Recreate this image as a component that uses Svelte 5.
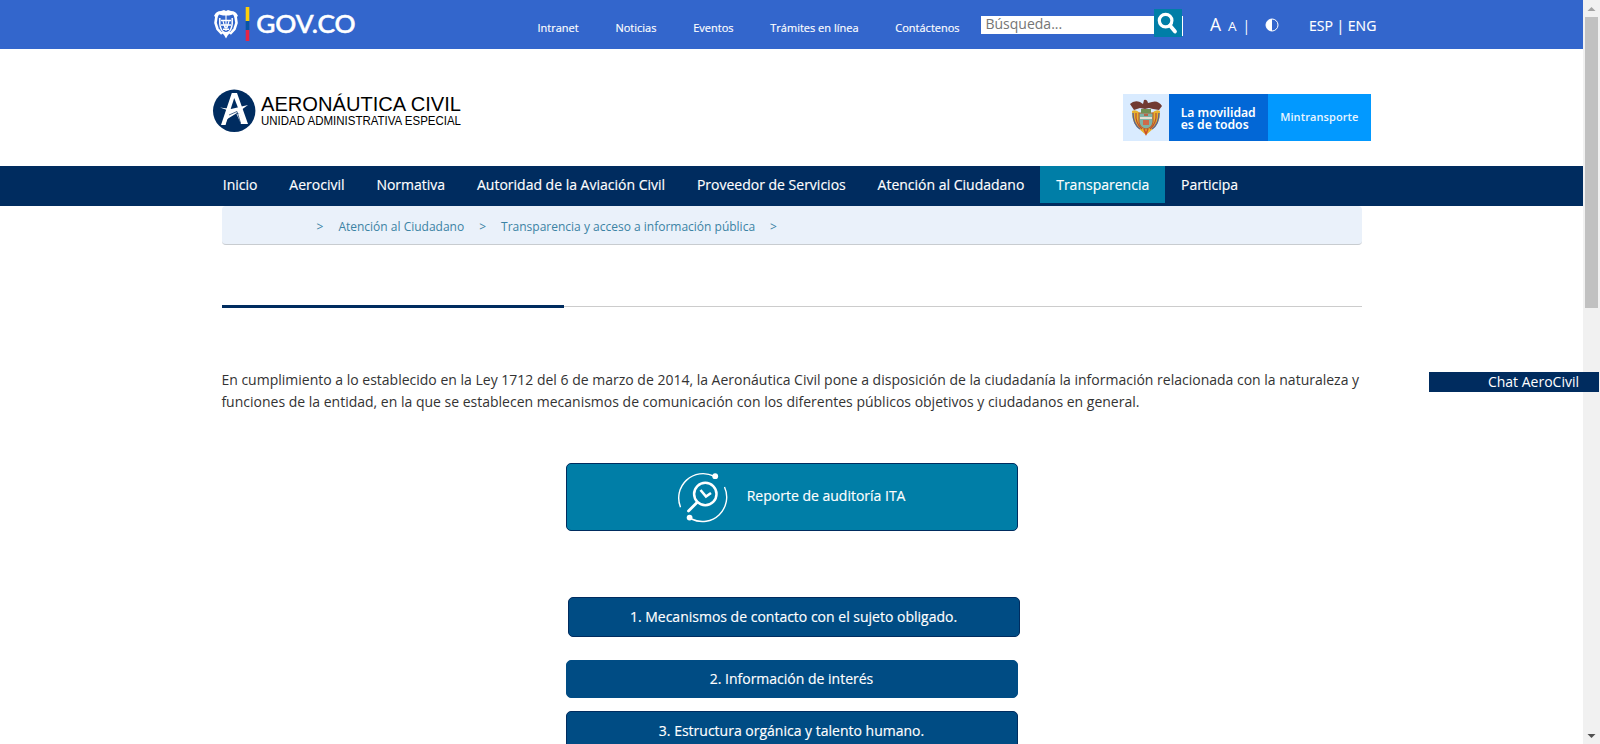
<script>
  const links = ['Intranet', 'Noticias', 'Eventos', 'Trámites en línea', 'Contáctenos'];
  const menu = ['Inicio', 'Aerocivil', 'Normativa', 'Autoridad de la Aviación Civil', 'Proveedor de Servicios', 'Atención al Ciudadano', 'Transparencia', 'Participa'];
  const topics = ['1. Mecanismos de contacto con el sujeto obligado.', '2. Información de interés', '3. Estructura orgánica y talento humano.'];
</script>

<div class="viewport">
  <div class="page">
    <header class="gov">
      <svg class="govlogo" width="150" height="49" viewBox="0 0 150 49" role="img" aria-label="Gobierno de Colombia">
        <g fill="none" stroke="#fff">
          <path d="M1 16Q3 11 8 11L11 10L13 11L15 10L18 11Q23 11 25 16L22 18L20 14.5L16 15.5H10L6 14.5L4 18Z" fill="#fff" stroke="none" />
          <path d="M3.5 16L2.5 23L4.5 29L9 34M22.5 16L23.5 23L21.5 29L17 34" stroke-width="2.6" />
          <path d="M6.8 18V24Q7.5 29.5 10 31.5Q13 34 16 31.5Q18.5 29.5 19.2 24V18" stroke-width="1.5" />
          <path d="M8 20.5H18M8 25H18M10 29.3H16" stroke-width="1.4" />
          <path d="M13 14V31M10 21L12 28M16 21L14 28" stroke-width="1.1" />
          <path d="M8 32L11 35L13 38.5L15 35L18 32Z" fill="#fff" stroke="none" />
        </g>
        <path fill="#fdcf08" d="M32.7 7h3.6v14h-3.6z" />
        <path fill="#0a55a5" d="M32.7 21h3.6v9h-3.6z" />
        <path fill="#e82444" d="M32.7 30h3.6v11h-3.6z" />
        <text x="43.2" y="33.2" textLength="99.4" lengthAdjust="spacingAndGlyphs" class="govtext">GOV.CO</text>
      </svg>
      <nav class="toplinks">
        {#each links as l}<a href="#top">{l}</a>{/each}
      </nav>
      <div class="search">
        <input placeholder="Búsqueda..." aria-label="Búsqueda" />
        <button aria-label="Buscar">
          <svg width="28" height="28" viewBox="0 0 28 28"><circle cx="11.6" cy="11.6" r="6.3" fill="none" stroke="#fff" stroke-width="3.2" /><path d="M16 16.6L21 22.5" stroke="#fff" stroke-width="3.8" stroke-linecap="round" /></svg>
        </button>
        <i></i>
      </div>
      <div class="sizes"><span class="big">A</span><span class="small">A</span><span class="bar">|</span></div>
      <svg class="contrast" width="14" height="14" viewBox="0 0 14 14"><circle cx="7" cy="7" r="6" fill="none" stroke="#fff" /><path d="M7 1a6 6 0 0 0 0 12z" fill="#fff" /></svg>
      <div class="lang">ESP | ENG</div>
    </header>

    <section class="brand">
      <svg width="252" height="50" viewBox="0 0 252 50" role="img" aria-label="Aeronáutica Civil">
        <circle cx="21.2" cy="24.8" r="21.2" fill="#002c60" />
        <path d="M8 39L18.8 7H24L35 38H30L26.4 27.5L21 26L15 30L12.6 39Z" fill="#fff" />
        <path d="M21.2 12L17.2 24.5L25.2 22.3Z" fill="#002c60" />
        <path d="M7 21.5L18 23L35 19L24 27L11 35L18 25.5Z" fill="#fff" />
        <path d="M13 26L17 28L12 38L11 36ZM23.5 28L28 38H31L26.5 27Z" fill="#fff" />
        <path d="M16 29L24 25.5L27.5 37" fill="none" stroke="#002c60" stroke-width=".7" />
        <text x="48" y="25.2" font-size="20.4" textLength="200" lengthAdjust="spacingAndGlyphs">AERONÁUTICA CIVIL</text>
        <text x="48" y="39.2" font-size="13.3" textLength="200" lengthAdjust="spacingAndGlyphs">UNIDAD ADMINISTRATIVA ESPECIAL</text>
      </svg>
      <svg width="248" height="48" viewBox="0 0 248 48" role="img" aria-label="Mintransporte">
        <path fill="#d9ebff" d="M0 0h46v47H0z" />
        <path fill="#0267d6" d="M46 0h99v47H46z" />
        <path fill="#0299ff" d="M145 0h103v47H145z" />
        <path d="M7 10Q11 6 17 8L20 10L21 6Q24 5 25 9L29 8Q35 6 39 12L36 16L30 15L26 14L22 15L17 14L11 16Z" fill="#713a32" />
        <path d="M9 17Q13 15 17 19H29Q33 15 37 17Q37 29 31 34L23 41L15 34Q9 29 9 17Z" fill="#e7b22e" />
        <path d="M10 19Q10 30 17 35M36 19Q36 30 29 35" fill="none" stroke="#5b648f" stroke-width="1.4" />
        <path d="M13 19Q12 29 19 35M33 19Q34 29 27 35" fill="none" stroke="#b94b35" stroke-width="1.2" />
        <path d="M16 19H30V28Q29 34 23 35Q17 34 16 28Z" fill="#7fb3a6" stroke="#b8602f" stroke-width="1.1" />
        <path d="M18 15H28V19H18Z" fill="#719052" />
        <path d="M17 23H29V25H17Z" fill="#e7dfd2" />
        <path d="M20 26H26V31H20Z" fill="#cf6a4a" />
        <path d="M21 21H25M21 35L23 40L25 35" fill="none" stroke="#c84c2b" stroke-width="1.5" />
        <text class="mt" x="57.7" y="23.3" textLength="75" lengthAdjust="spacingAndGlyphs">La movilidad</text>
        <text class="mt" x="57.7" y="35.2" textLength="68" lengthAdjust="spacingAndGlyphs">es de todos</text>
        <text class="mt min" x="157.2" y="27.2" textLength="78.2" lengthAdjust="spacing">Mintransporte</text>
      </svg>
    </section>

    <nav class="menu">
      {#each menu as m}<a href="#menu" class:active={m === 'Transparencia'}>{m}</a>{/each}
    </nav>

    <main>
      <div class="crumbs">
        <span>&gt;</span><a href="#atencion">Atención al Ciudadano</a><span>&gt;</span><a href="#info">Transparencia y acceso a información pública</a><span>&gt;</span>
      </div>
      <div class="rule"><div></div></div>
      <p>En cumplimiento a lo establecido en la Ley 1712 del 6 de marzo de 2014, la Aeronáutica Civil pone a disposición de la ciudadanía la información relacionada con la naturaleza y<br />funciones de la entidad, en la que se establecen mecanismos de comunicación con los diferentes públicos objetivos y ciudadanos en general.</p>
      <a class="report" href="#ita">
        <svg width="54" height="54" viewBox="0 0 54 54" fill="none" stroke="#fff">
          <path d="M5.5 37.2A24.4 24.4 0 0 1 39 6.2M49.5 17A24.4 24.4 0 0 1 16.5 49" stroke-width="1.4" />
          <circle cx="40.2" cy="6.2" r="2.9" fill="#fff" stroke="none" />
          <circle cx="14.6" cy="47.6" r="2.9" fill="#fff" stroke="none" />
          <circle cx="30.3" cy="24" r="11.2" stroke-width="2.5" />
          <path d="M22 32.5L13.5 41" stroke-width="2.8" stroke-linecap="round" />
          <path d="M25.5 20L31 26.5L36 23" stroke-width="2.6" />
        </svg>
        <span>Reporte de auditoría ITA</span>
      </a>
      <div class="topics">
        {#each topics as t}<a href="#tema">{t}</a>{/each}
      </div>
    </main>
  </div>
  <aside class="scroll">
    <svg width="17" height="17"><path d="M4.5 11L8.5 7L12.5 11Z" fill="#a3a3a3" /></svg>
    <div class="thumb"></div>
    <svg class="down" width="17" height="17"><path d="M4.5 7L8.5 11L12.5 7Z" fill="#505050" /></svg>
  </aside>
  <a class="chat" href="#chat">Chat AeroCivil</a>
</div>

<style>
  :global(body) { margin: 0; overflow: hidden; background: #fff; }
  * { box-sizing: border-box; }
  a { text-decoration: none; color: #fff; white-space: nowrap; }
  svg { display: block; flex: none; overflow: visible; }
  .viewport { position: relative; display: flex; width: 1600px; height: 744px; overflow: hidden; font: 14px/20px "Open Sans", "Noto Sans", sans-serif; }
  .page { width: 1583px; height: 744px; overflow: hidden; }
  .gov { height: 49px; background: #3366cc; display: flex; color: #fff; padding-left: 213px; }
  .govtext { font: 500 25.2px Lato, sans-serif; fill: #fff; stroke: #fff; stroke-width: .5px; }
  .toplinks { display: flex; gap: 36.8px; margin-left: 174.4px; width: 443.6px; padding-top: 18px; font-size: 11px; -webkit-text-stroke: .15px #fff; }
  .search { display: flex; width: 203px; }
  .search input { width: 173px; height: 18px; margin-top: 16px; border: 0; border-radius: 0; padding: 0 5px 3px 4.5px; font: 14px/15px "Open Sans", sans-serif; background: #fff; outline: 0; }
  .search input::placeholder { color: #757575; opacity: 1; }
  .search button { width: 28px; height: 28px; margin-top: 9px; padding: 0; border: 0; background: #007ea7; }
  .search i { width: 1px; height: 20px; margin: 16px 0 0; background: #fff; }
  .sizes { display: flex; align-items: baseline; width: 81px; padding: 14px 0 0 26px; }
  .big { font-size: 17.5px; width: 18px; }
  .small { font-size: 13.5px; width: 14.5px; }
  .bar { font-size: 14px; }
  .contrast { margin-top: 17.5px; }
  .lang { margin: 16px 0 0 30px; font-size: 14px; white-space: nowrap; -webkit-text-stroke: .15px #fff; }
  .brand { height: 117px; display: flex; justify-content: space-between; padding: 37px 212px 0 213px; }
  .brand svg:last-child { margin-top: 8px; }
  .brand text { font-family: "Liberation Sans", Arial, sans-serif; fill: #000; }
  .brand .mt { font: 600 12.5px "Noto Sans", sans-serif; fill: #fff; }
  .brand .min { font: 600 11px "Open Sans", sans-serif; fill: #e9f5ff; }
  .menu { height: 40px; background: #002c5f; display: flex; align-items: flex-start; padding-left: 206.9px; }
  .menu a { height: 37px; line-height: 37px; padding: 0 15.93px; -webkit-text-stroke: .15px #fff; }
  .menu .active { background: #007ea7; }
  main { width: 1140px; margin-left: 222px; }
  .crumbs { height: 39px; background: #eaf1fa; border-bottom: 1px solid #c8ccd0; border-radius: 4px; padding: 11px 0 0 94.5px; display: flex; gap: 15px; font-size: 12px; }
  .crumbs a, .crumbs span { color: #3b83a4; }
  .rule { margin-top: 60px; height: 3px; background: linear-gradient(#ccc, #ccc) 0 1px / 100% 1px no-repeat; }
  .rule div { width: 342px; height: 3px; background: #002c5f; }
  p { margin: 61px 0 0 -.6px; height: 94px; line-height: 22px; color: #333; white-space: nowrap; }
  .report { display: flex; align-items: center; width: 452px; height: 68px; margin-left: 344px; padding-left: 108.3px; border: 1px solid #002c5f; border-radius: 5px; background: #007ea7; }
  .report span { margin-left: 17.4px; padding-bottom: 2px; -webkit-text-stroke: .15px #fff; }
  .report svg { margin-top: -1px; }
  .topics { display: flex; flex-direction: column; padding-top: 66px; margin-left: 344px; }
  .topics a { width: 452px; height: 40px; line-height: 37px; text-align: center; border: 1px solid #002c5f; border-radius: 5px; background: #004c84; padding-right: 1px; -webkit-text-stroke: .15px #fff; }
  .topics a:first-child { margin: 0 0 23px 2px; }
  .topics a:nth-child(2) { height: 38px; line-height: 36px; border-color: #004c84; margin-bottom: 13px; }
  .scroll { width: 17px; height: 744px; background: #f1f1f1; display: flex; flex-direction: column; }
  .thumb { height: 291px; margin: 0 2px; background: #c1c1c1; }
  .down { margin-top: auto; }
  .chat { position: absolute; left: 1429px; top: 372px; width: 170px; height: 20px; padding-right: 20px; text-align: right; background: #002c5f; }
</style>
